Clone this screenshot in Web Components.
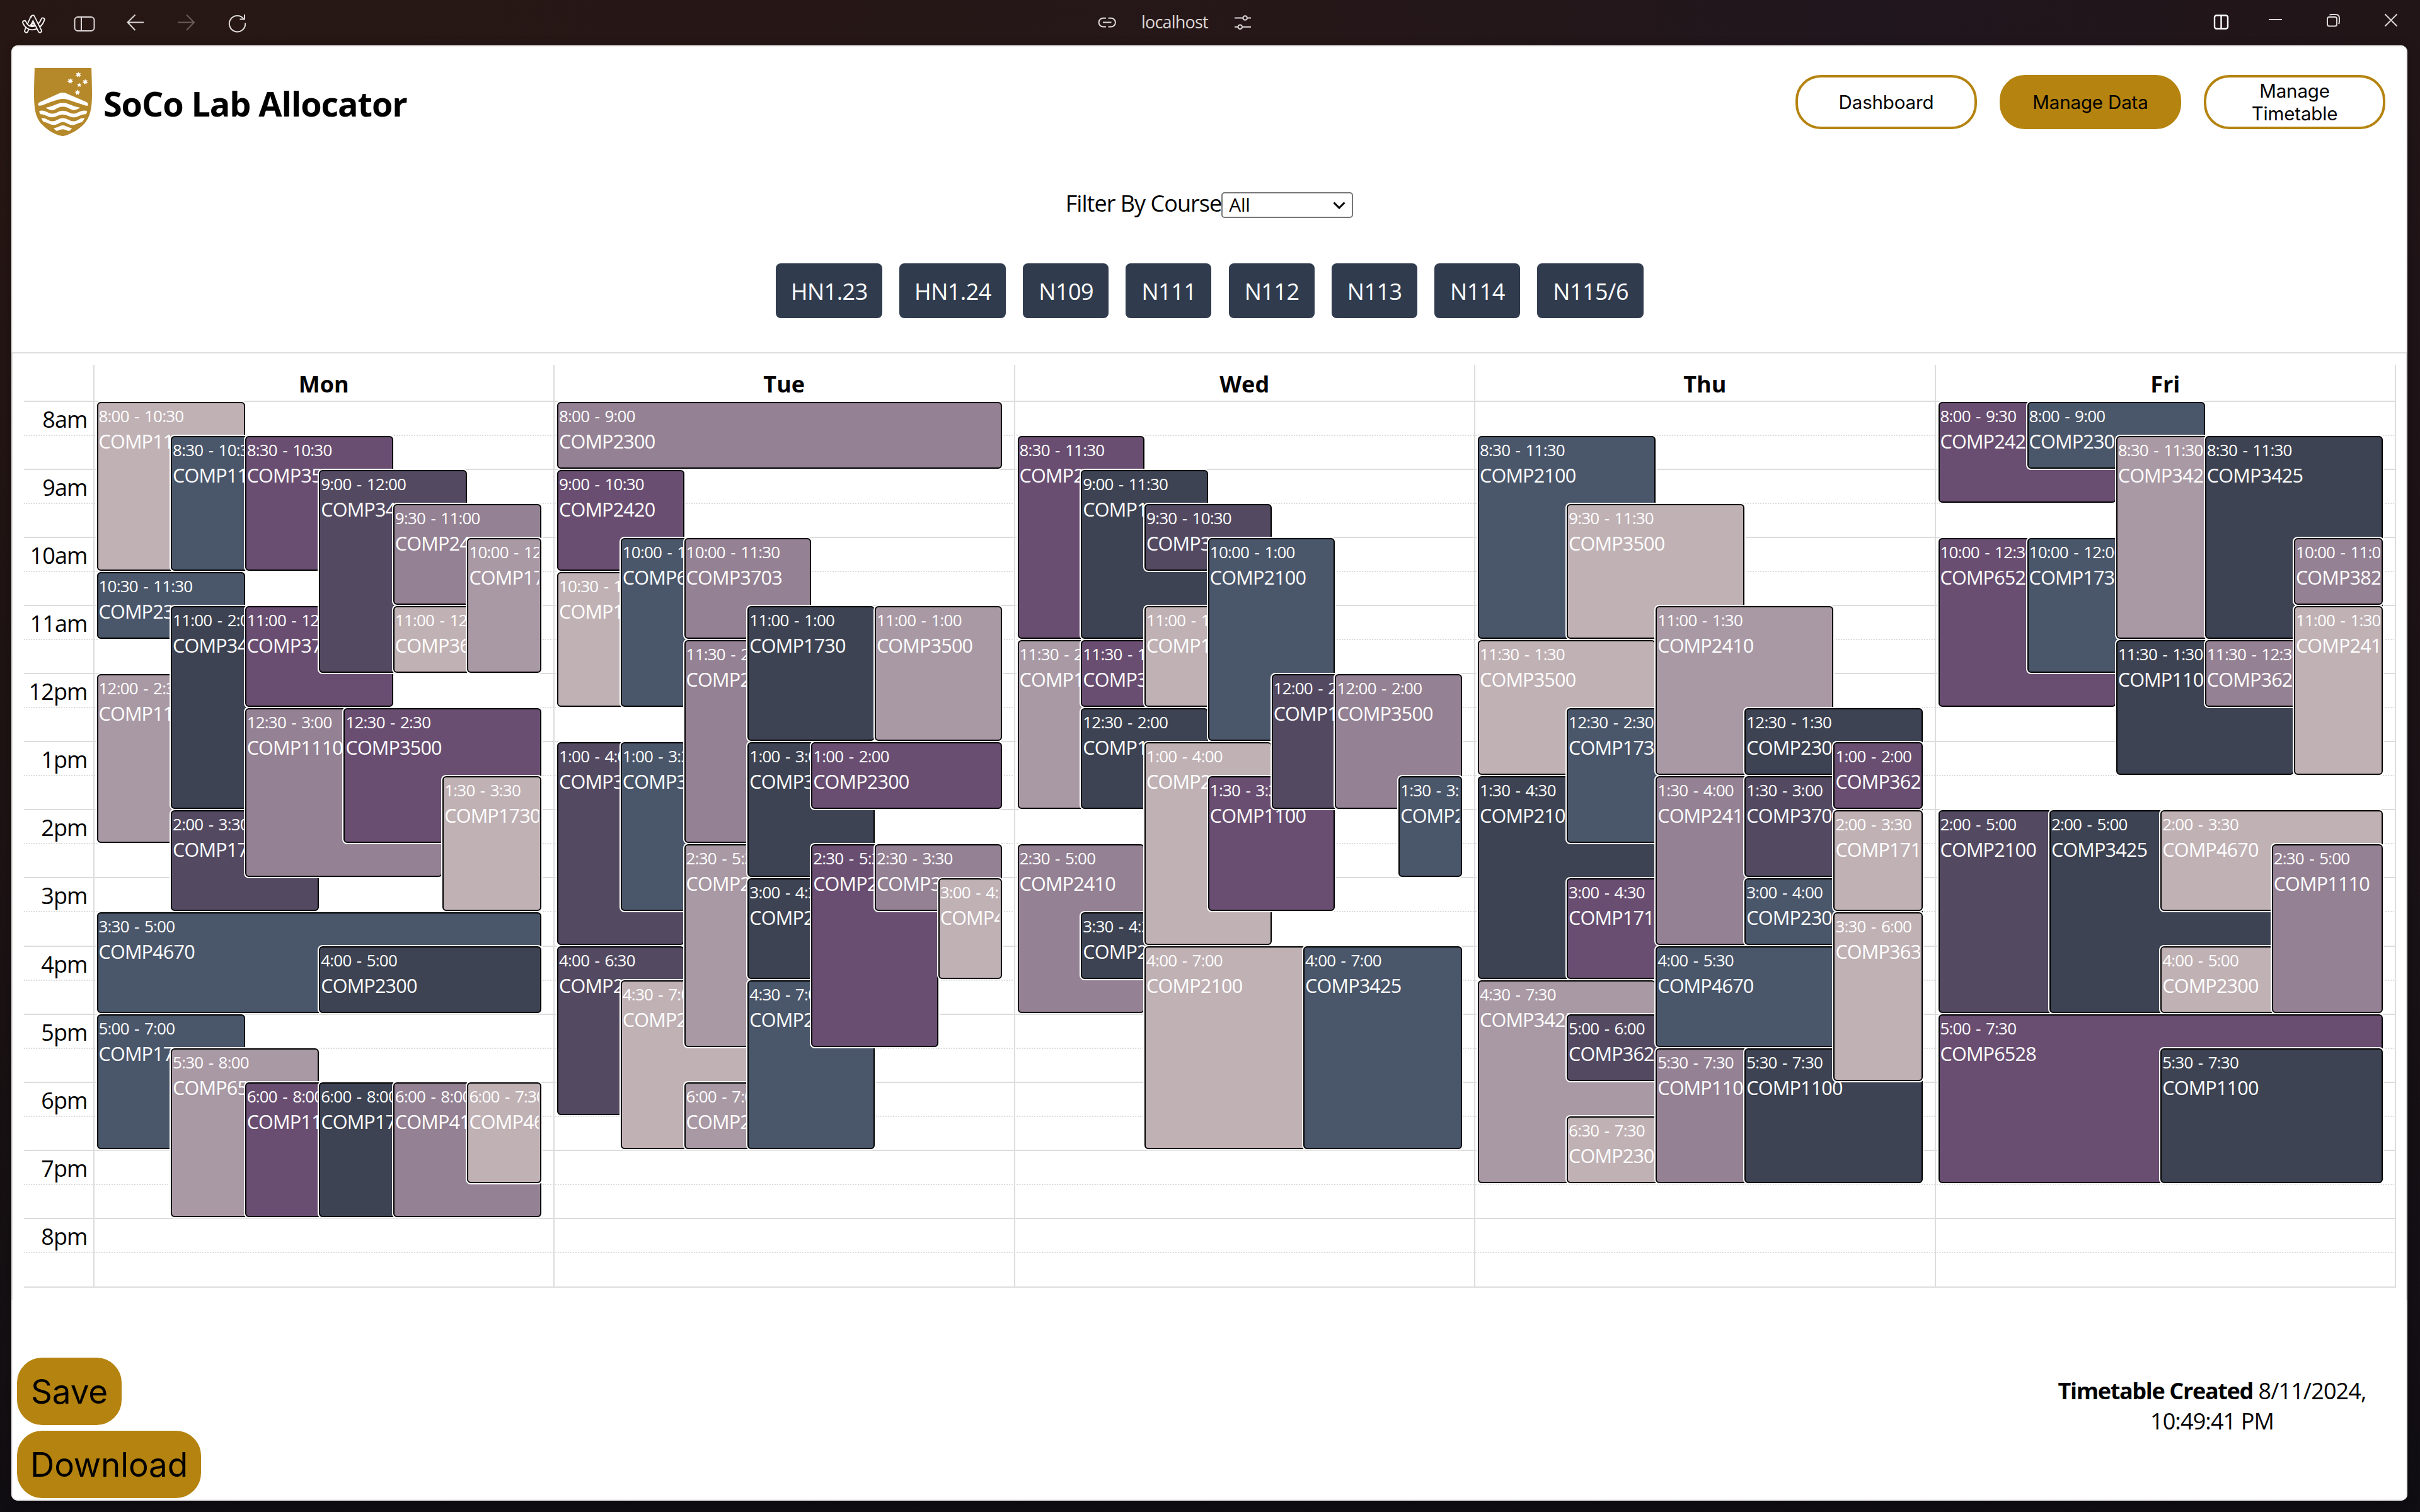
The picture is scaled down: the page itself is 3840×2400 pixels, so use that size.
<!DOCTYPE html>
<html lang="en">
<head>
<meta charset="utf-8">
<title>SoCo Lab Allocator</title>
<style>
  html, body { margin: 0; height: 2400px; }
  body {
    width: 3840px; overflow: hidden;
    font-family: "Open Sans", "Noto Sans", sans-serif;
    font-size: 36px; color: #000;
  }
</style>
</head>
<body>
<app-shell></app-shell>

<script>
const define = (name, html, extra) => customElements.define(name, class extends HTMLElement {
  connectedCallback() {
    if (this.shadowRoot) return;
    const root = this.attachShadow({ mode: 'open' });
    root.innerHTML = typeof html === 'function' ? html(this) : html;
    if (extra) extra(this, root);
  }
});

/* Gold pill button; variants are set with custom properties */
define('pill-button', el => `
  <style>
    :host { display: block; }
    button {
      width: var(--w, 288px); height: var(--h, 86px); padding: 0 30px; margin: 0;
      display: flex; align-items: center; justify-content: center; text-align: center;
      border: 4px solid #b5830f; border-radius: 40px;
      background: ${el.hasAttribute('filled') ? '#b5830f' : '#fff'};
      font: 400 var(--fs, 29.5px)/var(--lh, 36px) Inter, sans-serif; letter-spacing: -.15px; color: #000;
      box-sizing: border-box;
    }
  </style>
  <button><slot></slot></button>`);

define('room-button', `
  <style>
    :host { display: block; }
    button {
      width: var(--w, 136px); height: 87px; padding: 2px 0 0 1px; margin: 0; border: 0; border-radius: 8px;
      display: flex; align-items: center; justify-content: center;
      background: #303c4e; color: #fff; font: inherit; letter-spacing: -.5px; line-height: 48px;
    }
  </style>
  <button><slot></slot></button>`);

/* University crest */
const star = (cx, cy, r, n) => {
  let p = '';
  for (let i = 0; i < n * 2; i++) {
    const a = -Math.PI / 2 + i * Math.PI / n, q = i % 2 ? r * .5 : r;
    p += (cx + Math.cos(a) * q * .76).toFixed(1) + ',' + (cy + Math.sin(a) * q).toFixed(1) + ' ';
  }
  return `<polygon points="${p}"/>`;
};
define('crest-logo', `
  <style>:host { display: block; width: 92px; height: 108px; } svg { display: block; width: 100%; height: 100%; }</style>
  <svg viewBox="118 324 200 324" preserveAspectRatio="none">
    <path fill="#b5882a" d="M120 324H316C317 370 318 410 318 450C318 530 308 562 292 588C270 622 240 640 225 646Q217 650 209 646C190 640 165 622 142 588C124 558 118 520 118 450C118 410 119 370 120 324Z"/>
    <g fill="#fff">
      <path d="M207 443Q217 439 227 443L298 485Q306 490 304 503Q300 505 290 500Q255 485 235 475Q217 467 200 475Q175 485 147 501Q137 505 132 502Q131 491 138 486Z"/>
      <path d="M158 513Q175 508 200 494Q217 486 235 494Q260 508 277 513Q262 526 252 524Q243 520 233 512Q217 503 202 512Q190 522 182 525Q172 526 158 513Z"/>
      <path d="M136 528Q150 524 160 532Q180 548 196 536Q217 519 240 536Q256 548 275 532Q288 524 301 528Q301 540 297 544Q285 543 272 553Q256 566 236 552Q217 538 198 552Q180 566 162 552Q150 543 140 544Q136 538 136 528Z"/>
      <path d="M143 562Q155 561 168 572Q182 584 198 571Q217 554 238 571Q254 584 268 572Q280 561 293 562Q288 575 284 581Q272 584 262 592Q250 600 236 590Q217 572 200 590Q186 600 172 590Q160 582 150 580Q145 572 143 562Z"/>
      <path d="M186 611Q200 606 208 600Q217 594 227 600Q238 608 249 611Q243 622 237 624Q217 608 197 624Q190 620 186 611Z"/>
      ${star(271, 356, 14, 7)}${star(243, 386, 14, 7)}${star(294.5, 390, 14, 7)}${star(268, 440, 14, 7)}${star(274, 405, 11, 5)}
    </g>
  </svg>`);

/* Browser chrome */
define('browser-bar', `
  <style>
    :host { display: flex; height: 72px; flex: none; align-items: stretch; color: #dcd8d7; }
    svg { display: block; height: 72px; flex: none; overflow: visible; fill: none; stroke: #dcd8d7; stroke-width: 2; }
    .addr { font-size: 27px; letter-spacing: -.8px; line-height: 69px; width: 108px; margin-left: 39px; white-space: nowrap; }
    .right { margin-left: auto; display: flex; padding-right: 36px; }
  </style>
  <svg style="margin-left:34px" width="39" viewBox="34 0 39 72" stroke-linecap="round" stroke-linejoin="round">
    <g stroke="#f4f2f1" stroke-width="7"><path d="M51 28L41.7 49"/></g><g stroke="#261716" stroke-width="3.4"><path d="M51 28L41.7 49"/></g>
    <g stroke="#f4f2f1" stroke-width="7"><path d="M38.7 35.5C41.5 42 47 45.3 52.5 44.6C60.5 43.5 65.5 38 68 31"/></g>
    <g stroke="#261716" stroke-width="3.4"><path d="M38.7 35.5C41.5 42 47 45.3 52.5 44.6C60.5 43.5 65.5 38 68 31"/></g>
    <path stroke="#f4f2f1" stroke-width="7" d="M52.3 27L63.3 49"/>
    <path stroke="#261716" stroke-width="3.4" d="M48 36L52.3 27L63.3 49"/>
    <path stroke="#f4f2f1" stroke-width="1.8" d="M52.3 35.5L49.5 41H55Z"/>
  </svg>
  <svg style="margin-left:44px" width="34" viewBox="117 0 34 72"><rect x="118.5" y="27" width="31" height="22" rx="5"/><path d="M129 27V49"/></svg>
  <svg style="margin-left:50px" width="28" viewBox="201 0 28 72"><path d="M228 35.5H202.5M214.500 23.500L202.500 35.500L214.500 48"/></svg>
  <svg style="margin-left:53px;stroke:#6a5c5a" width="28" viewBox="282 0 28 72"><path d="M282 35.500H308M296 23.500L308 35.500L296 48"/></svg>
  <svg style="margin-left:52px" width="30" viewBox="362 0 30 72"><path d="M387 30.500A12.700 12.700 0 1 0 389.200 36.500M388 23V30.500H380.500"/></svg>
  <svg style="margin-left:1351px" width="29" viewBox="1743 0 29 72" stroke-width="2.200"><path d="M1755 28.800H1750.500A6.800 6.800 0 0 0 1750.500 42.600H1755M1758.500 28.800H1763A6.800 6.800 0 0 1 1763 42.600H1758.500M1750 35.600H1763.500"/></svg>
  <div class="addr">localhost</div>
  <svg style="margin-left:40px" width="28" viewBox="1959 0 28 72"><path d="M1959 28.500H1972M1979.500 28.500H1985M1959 42.700H1964M1971.500 42.700H1985"/><circle cx="1975.700" cy="28.500" r="3.300"/><circle cx="1967.800" cy="42.700" r="3.300"/></svg>
  <div class="right">
    <svg width="24" viewBox="3513 0 24 72" style="stroke:#fff;stroke-width:2.400"><rect x="3514" y="24.500" width="21" height="21" rx="3"/><path d="M3524.500 24.500V45.500"/></svg>
    <svg style="margin-left:63px" width="22" viewBox="3600 0 22 72"><path d="M3600 31H3621"/></svg>
    <svg style="margin-left:70px" width="22" viewBox="3692 0 22 72"><rect x="3693" y="27" width="15" height="14.500" rx="3"/><path d="M3696.500 23.500Q3698 23 3700 23H3706Q3712 23 3712 29V34Q3712 36.500 3711 38"/></svg>
    <svg style="margin-left:70px" width="20" viewBox="3784 0 20 72"><path d="M3784.500 22.500L3803.500 41.500M3803.500 22.500L3784.500 41.500"/></svg>
  </div>`);

define('app-header', `
  <style>
    :host { display: flex; align-items: flex-start; height: 226px; padding: 36px 35px 0 36px; box-sizing: border-box; }
    h1 { margin: 20px 0 0 18px; font-size: 54px; line-height: 73px; font-weight: 700; letter-spacing: -1.12px; white-space: nowrap; }
    nav { margin: 11px 0 0 auto; display: flex; gap: 36px; }
  </style>
  <crest-logo></crest-logo><h1>SoCo Lab Allocator</h1>
  <nav>
    <pill-button>Dashboard</pill-button>
    <pill-button filled>Manage Data</pill-button>
    <pill-button>Manage Timetable</pill-button>
  </nav>`);

define('course-filter', `
  <style>
    :host { display: flex; justify-content: center; align-items: flex-start; height: 48px; }
    label { line-height: 50px; letter-spacing: -.97px; }
    .select {
      margin-top: 7px; width: 209px; height: 41px; box-sizing: border-box; border: 2px solid #767676; border-radius: 5px;
      display: flex; align-items: center; justify-content: space-between; padding: 0 10px 2px 10px;
      font-size: 30px; line-height: 34px; letter-spacing: -.3px;
    }
    svg { width: 20px; height: 12px; margin-top: 2px; fill: none; stroke: #000; stroke-width: 3; }
  </style>
  <label>Filter By Course</label>
  <div class="select"><span>All</span><svg viewBox="0 0 20 12"><path d="M1.500 1.500L10 10L18.500 1.500"/></svg></div>`);

define('room-list', `
  <style>:host { display: flex; justify-content: center; gap: 27.200px; margin: 72px 0 0 1px; } .wide { --w: 169px; }</style>
  <room-button class="wide">HN1.23</room-button><room-button class="wide">HN1.24</room-button>
  <room-button>N109</room-button><room-button>N111</room-button><room-button>N112</room-button>
  <room-button>N113</room-button><room-button>N114</room-button><room-button class="wide">N115/6</room-button>`);

/* Timetable data: [start, end, colour, left, right, course]; left and right are fractions of the column */
const COLORS = { B: '#c0b1b4', S: '#4a566a', P: '#694e71', V: '#534a62', M: '#948193', L: '#a999a4', D: '#3d4352' };
const units = (n, rows) => rows.map(([s, e, c, l, r, t]) => [s, e, c, l / n, r / n, t]);
const DAYS = {
  Mon: units(6, [
    [8, 10.5, 'B', 0, 2, 'COMP1110'], [8.5, 10.5, 'S', 1, 3, 'COMP1110'], [8.5, 10.5, 'P', 2, 4, 'COMP3500'],
    [9, 12, 'V', 3, 5, 'COMP3425'], [9.5, 11, 'M', 4, 6, 'COMP2410'], [10, 12, 'L', 5, 6, 'COMP1730'],
    [10.5, 11.5, 'S', 0, 2, 'COMP2300'], [11, 14, 'D', 1, 3, 'COMP3425'], [11, 12.5, 'P', 2, 4, 'COMP3703'],
    [11, 12, 'B', 4, 6, 'COMP3620'], [12, 14.5, 'L', 0, 2, 'COMP1100'], [14, 15.5, 'V', 1, 3, 'COMP1730'],
    [15.5, 17, 'S', 0, 6, 'COMP4670'], [16, 17, 'D', 3, 6, 'COMP2300'], [17, 19, 'S', 0, 2, 'COMP1730'],
    [17.5, 20, 'L', 1, 3, 'COMP6528'], [18, 20, 'P', 2, 4, 'COMP1100'], [18, 20, 'D', 3, 5, 'COMP1730'],
    [18, 20, 'M', 4, 6, 'COMP4130'], [18, 19.5, 'B', 5, 6, 'COMP4670']
  ]).concat([
    [12.5, 15, 'M', 3 / 9, 7 / 9, 'COMP1110'], [12.5, 14.5, 'P', 5 / 9, 1, 'COMP3500'], [13.5, 15.5, 'B', 7 / 9, 1, 'COMP1730']
  ]),
  Tue: units(7, [
    [8, 9, 'M', 0, 7, 'COMP2300'], [9, 10.5, 'P', 0, 2, 'COMP2420'], [10, 12.5, 'S', 1, 3, 'COMP6240'],
    [10, 11.5, 'M', 2, 4, 'COMP3703'], [10.5, 12.5, 'B', 0, 2, 'COMP1730'], [11, 13, 'D', 3, 5, 'COMP1730'],
    [11, 13, 'L', 5, 7, 'COMP3500'], [11.5, 14.5, 'M', 2, 4, 'COMP2410'], [13, 16, 'V', 0, 2, 'COMP3500'],
    [13, 15.5, 'S', 1, 3, 'COMP3425'], [13, 15, 'D', 3, 5, 'COMP3620'], [13, 14, 'P', 4, 7, 'COMP2300'],
    [14.5, 17.5, 'L', 2, 4, 'COMP2100'], [14.5, 17.5, 'P', 4, 6, 'COMP2410'], [14.5, 15.5, 'M', 5, 7, 'COMP3500'],
    [15, 16.5, 'D', 3, 5, 'COMP2300'], [15, 16.5, 'B', 6, 7, 'COMP4670'], [16, 18.5, 'V', 0, 2, 'COMP2410'],
    [16.5, 19, 'B', 1, 3, 'COMP2100'], [16.5, 19, 'S', 3, 5, 'COMP2410'], [18, 19, 'L', 2, 4, 'COMP2300']
  ]),
  Wed: units(7, [
    [8.5, 11.5, 'P', 0, 2, 'COMP2100'], [9, 11.5, 'D', 1, 3, 'COMP1110'], [9.5, 10.5, 'V', 2, 4, 'COMP3620'],
    [10, 13, 'S', 3, 5, 'COMP2100'], [11, 12.5, 'B', 2, 4, 'COMP1730'], [11.5, 14, 'L', 0, 2, 'COMP1100'],
    [11.5, 12.5, 'P', 1, 3, 'COMP3620'], [12, 14, 'V', 4, 6, 'COMP1730'], [12, 14, 'M', 5, 7, 'COMP3500'],
    [12.5, 14, 'D', 1, 3, 'COMP1110'], [13, 16, 'B', 2, 4, 'COMP2100'], [13.5, 15.5, 'P', 3, 5, 'COMP1100'],
    [13.5, 15, 'S', 6, 7, 'COMP2420'], [14.5, 17, 'M', 0, 2, 'COMP2410'], [15.5, 16.5, 'D', 1, 3, 'COMP2300'],
    [16, 19, 'B', 2, 6, 'COMP2100'], [16, 19, 'S', 4.5, 7, 'COMP3425']
  ]),
  Thu: units(5, [
    [8.5, 11.5, 'S', 0, 2, 'COMP2100'], [9.5, 11.5, 'B', 1, 3, 'COMP3500'], [11, 13.5, 'L', 2, 4, 'COMP2410'],
    [11.5, 13.5, 'B', 0, 2, 'COMP3500'], [12.5, 14.5, 'S', 1, 3, 'COMP1730'], [12.5, 13.5, 'D', 3, 5, 'COMP2300'],
    [13, 14, 'P', 4, 5, 'COMP3620'], [13.5, 16.5, 'D', 0, 2, 'COMP2100'], [13.5, 16, 'M', 2, 4, 'COMP2410'],
    [13.5, 15, 'V', 3, 5, 'COMP3703'], [14, 15.5, 'B', 4, 5, 'COMP1710'], [15, 16.5, 'P', 1, 3, 'COMP1710'],
    [15, 16, 'S', 3, 5, 'COMP2300'], [15.5, 18, 'B', 4, 5, 'COMP3630'], [16, 17.5, 'S', 2, 5, 'COMP4670'],
    [16.5, 19.5, 'L', 0, 2, 'COMP3425'], [17, 18, 'V', 1, 3, 'COMP3620'], [17.5, 19.5, 'M', 2, 4, 'COMP1100'],
    [17.5, 19.5, 'D', 3, 5, 'COMP1100'], [18.5, 19.5, 'B', 1, 3, 'COMP2300']
  ]),
  Fri: units(5, [
    [8, 9.5, 'P', 0, 2, 'COMP2420'], [8, 9, 'S', 1, 3, 'COMP2300'], [8.5, 11.5, 'L', 2, 4, 'COMP3425'],
    [8.5, 11.5, 'D', 3, 5, 'COMP3425'], [10, 12.5, 'P', 0, 2, 'COMP6528'], [10, 12, 'S', 1, 3, 'COMP1730'],
    [10, 11, 'M', 4, 5, 'COMP3820'], [11, 13.5, 'B', 4, 5, 'COMP2410'], [11.5, 13.5, 'D', 2, 4, 'COMP1100'],
    [11.5, 12.5, 'M', 3, 5, 'COMP3620']
  ]).concat(units(4, [
    [14, 17, 'V', 0, 2, 'COMP2100'], [14, 17, 'D', 1, 4, 'COMP3425'], [14, 15.5, 'B', 2, 4, 'COMP4670'],
    [14.5, 17, 'M', 3, 4, 'COMP1110'], [16, 17, 'B', 2, 4, 'COMP2300'], [17, 19.5, 'P', 0, 4, 'COMP6528'],
    [17.5, 19.5, 'D', 2, 4, 'COMP1100']
  ]))
};
const clock = h => ((Math.floor(h) - 1) % 12 + 1) + (h % 1 ? ':30' : ':00');

define('lab-event', `
  <style>
    :host {
      display: block; box-sizing: border-box; min-width: 0; min-height: 0; margin-bottom: 2px;
      border: 2px solid #000; border-radius: 6px; box-shadow: 0 0 0 2px #fff;
      padding: 3px 2px 2px 1px; color: #fff; white-space: nowrap;
    }
    .clip { height: 100%; overflow: hidden; }
    .time { font-size: 26px; line-height: 35.600px; letter-spacing: -.8px; word-spacing: 2.400px; }
    .name { font-size: 30.600px; line-height: 43.400px; letter-spacing: -.83px; }
  </style>
  <div class="clip"><div class="time"><slot name="time"></slot></div><div class="name"><slot></slot></div></div>`);

/* One day: 26 half-hour rows; events share one grid column and are inset by percentages */
define('day-column', `
  <style>
    :host { display: block; box-sizing: border-box; border-right: 2px solid #ddd; padding: 2px 19px 0 4px; min-width: 0; }
    .grid { display: grid; grid-template: repeat(26, 54.020px) / minmax(0, 1fr); isolation: isolate; }
  </style>
  <div class="grid"></div>`, (el, root) => {
    root.querySelector('.grid').innerHTML = DAYS[el.getAttribute('day')].map(([s, e, c, l, r, t]) => `
      <lab-event style="grid-area:${(s - 8) * 2 + 1}/1/${(e - 8) * 2 + 1}/2;z-index:${Math.round(l * 100) + 1};background:${COLORS[c]};margin-left:${l * 100}%;margin-right:${(1 - r) * 100}%"><span slot="time">${clock(s)} - ${clock(e)}</span>${t}</lab-event>`).join('');
  });

define('week-calendar', () => {
  const names = Object.keys(DAYS);
  const rows = Array.from({ length: 26 }, (_, i) => {
    const h = 8 + i / 2;
    return `<div class="slot ${i % 2 ? 'half' : ''}"><span>${i % 2 ? '' : clock(h).split(':')[0] + (h < 12 ? 'am' : 'pm')}</span></div>`;
  }).join('');
  return `
  <style>
    :host { display: block; margin-top: 54px; height: 1504px; box-sizing: border-box; border: 2px solid #ddd; border-bottom: 0; padding: 18px 16px 0 18px; }
    .head, .days { display: grid; grid-template-columns: 111.500px repeat(5, minmax(0, 1fr)); }
    .head { height: 57px; }
    .head > * { border-right: 2px solid #ddd; text-align: center; font-weight: 700; line-height: 61px; height: 57px; }
    .body { display: grid; grid-template: 1408px / 100%; }
    .slots, .days { grid-area: 1 / 1; }
    .slots { display: grid; grid-template-rows: repeat(26, 54.040px); border-bottom: 2px solid #ddd; box-sizing: border-box; }
    .slot { border-top: 2px solid #ddd; line-height: 56px; letter-spacing: -.9px; height: 52px; }
    .slot.half { border-top-style: dotted; }
    .slot span { display: block; width: 100.500px; text-align: right; }
    .axis { border-right: 2px solid #ddd; }
  </style>
  <div class="head"><div></div>${names.map(n => `<div>${n}</div>`).join('')}</div>
  <div class="body">
    <div class="slots">${rows}</div>
    <div class="days"><div class="axis"></div>${names.map(n => `<day-column day="${n}"></day-column>`).join('')}</div>
  </div>`;
});

define('app-footer', `
  <style>
    :host { display: flex; justify-content: space-between; align-items: flex-start; padding: 92px 55px 0 9px; }
    .actions { display: flex; flex-direction: column; gap: 9px; --h: 107px; --fs: 53px; --lh: 64px; }
    p { margin: 29px 0 0; width: 510px; text-align: center; line-height: 48px; letter-spacing: -.88px; }
    b { letter-spacing: -1.340px; }
  </style>
  <div class="actions">
    <pill-button filled style="--w:166px">Save</pill-button>
    <pill-button filled style="--w:292px">Download</pill-button>
  </div>
  <p><b>Timetable Created</b> 8/11/2024, 10:49:41 PM</p>`);

define('app-shell', `
  <style>
    :host {
      display: flex; flex-direction: column; height: 2400px;
      background:
        linear-gradient(180deg, rgba(14,13,18,0) 72px, rgba(14,13,18,.45) 1400px, rgba(14,13,18,.85) 2340px, rgba(14,13,18,.95)),
        linear-gradient(90deg, #271714, #251718 55%, #20161d 78%, #221518);
    }
    main {
      flex: none; height: 2310px; margin: 0 20px 0 18px; background: #fff; border-radius: 10px; overflow: hidden;
      box-shadow: 0 4px 16px rgba(0,0,0,.35);
    }
    .page { height: 2310px; border-radius: 10px; box-shadow: inset 0 0 0 2px #f1efef; }
  </style>
  <browser-bar></browser-bar>
  <main><div class="page">
    <app-header></app-header>
    <course-filter></course-filter>
    <room-list></room-list>
    <week-calendar></week-calendar>
    <app-footer></app-footer>
  </div></main>`);
</script>
</body>
</html>
